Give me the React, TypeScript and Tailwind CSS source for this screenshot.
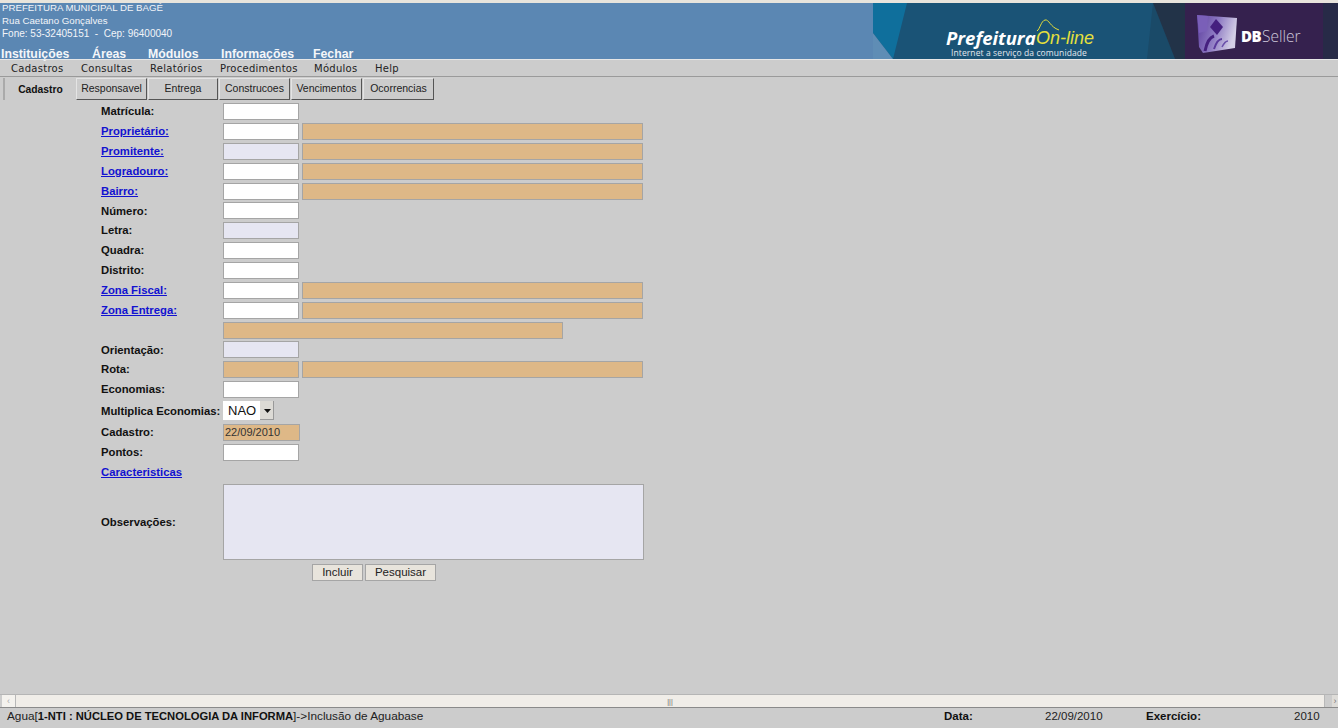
const Arial = { fontFamily: '"Liberation Sans", Arial, sans-serif' };

const topLinks = [
  { label: "Instituições", w: "w-[91px]" },
  { label: "Áreas", w: "w-[56px]" },
  { label: "Módulos", w: "w-[73px]" },
  { label: "Informações", w: "w-[92px]" },
  { label: "Fechar", w: "w-[60px]" },
];

const menus = [
  { label: "Cadastros", w: "w-[70px]" },
  { label: "Consultas", w: "w-[69px]" },
  { label: "Relatórios", w: "w-[70px]" },
  { label: "Procedimentos", w: "w-[94px]" },
  { label: "Módulos", w: "w-[61px]" },
  { label: "Help", w: "w-[40px]" },
];

const tabs = [
  { label: "Responsavel", w: "w-[71px]" },
  { label: "Entrega", w: "w-[70px]" },
  { label: "Construcoes", w: "w-[71px]" },
  { label: "Vencimentos", w: "w-[71px]" },
  { label: "Ocorrencias", w: "w-[71px]" },
];

type RowData = {
  label?: string;
  link?: boolean;
  code?: "white" | "lilac" | "tan";
  desc?: boolean;
  h: string;
};

const rows: RowData[] = [
  { label: "Matrícula:", code: "white", h: "h-[20px]" },
  { label: "Proprietário:", link: true, code: "white", desc: true, h: "h-[20px]" },
  { label: "Promitente:", link: true, code: "lilac", desc: true, h: "h-[20px]" },
  { label: "Logradouro:", link: true, code: "white", desc: true, h: "h-[20px]" },
  { label: "Bairro:", link: true, code: "white", desc: true, h: "h-[20px]" },
  { label: "Número:", code: "white", h: "h-[19px]" },
  { label: "Letra:", code: "lilac", h: "h-[20px]" },
  { label: "Quadra:", code: "white", h: "h-[20px]" },
  { label: "Distrito:", code: "white", h: "h-[20px]" },
  { label: "Zona Fiscal:", link: true, code: "white", desc: true, h: "h-[20px]" },
  { label: "Zona Entrega:", link: true, code: "white", desc: true, h: "h-[20px]" },
];

const rowsAfter: RowData[] = [
  { label: "Orientação:", code: "lilac", h: "h-[19px]" },
  { label: "Rota:", code: "tan", desc: true, h: "h-[20px]" },
  { label: "Economias:", code: "white", h: "h-[20px]" },
];

const fieldColor = {
  white: "bg-white",
  lilac: "bg-[#e6e6f2]",
  tan: "bg-[#deb887]",
};

const Field = ({ color, className }: { color: "white" | "lilac" | "tan"; className: string }) => (
  <div className={`h-[17px] border border-[#a5a5a5] ${fieldColor[color]} ${className}`} />
);

const Label = ({ text, link }: { text: string; link?: boolean }) => (
  <div className="w-[122px] shrink-0 whitespace-nowrap pt-[1px] text-[11.3px] font-bold">
    {link ? <a className="text-[#1212d0] underline">{text}</a> : <span className="text-[#111]">{text}</span>}
  </div>
);

const FormRow = ({ label, link, code, desc, h }: RowData) => (
  <div className={`flex items-center ${h}`}>
    <Label text={label ?? ""} link={link} />
    {code && <Field color={code} className="w-[76px]" />}
    {desc && <Field color="tan" className="ml-[3px] w-[341px]" />}
  </div>
);

const Banner = () => (
  <div className="relative h-[56px] w-[465px] shrink-0 overflow-hidden bg-[#1a5376]">
    <svg width="465" height="56" viewBox="0 0 465 56" className="absolute inset-0">
      <defs>
        <linearGradient id="dbs" x1="0" y1="0" x2="1" y2="0.3">
          <stop offset="0" stopColor="#5a3a9c" />
          <stop offset="0.55" stopColor="#8f7cc4" />
          <stop offset="1" stopColor="#d4cfe6" />
        </linearGradient>
      </defs>
      <polygon points="0,0 34,0 20,56 0,30" fill="#0f6f9c" />
      <polygon points="0,30 20,56 0,56" fill="#5f8db5" />
      <polygon points="280,0 302,56 274,56" fill="#1a4a68" />
      <polygon points="280,0 312,0 312,56 302,56" fill="#223348" />
      <rect x="312" y="0" width="138" height="56" fill="#35214e" />
      <rect x="450" y="0" width="15" height="56" fill="#272a47" />
      <path d="M164 28 C167 26 168 18 172 17 C176 16 177 24 186 27" fill="none" stroke="#e4dc3a" strokeWidth="1" />
      <polygon points="324,12 364,15 362,45 330,50 326,44" fill="url(#dbs)" />
      <polygon points="324,12 335,13 334,28 326,30" fill="#7a5fb8" />
      <polygon points="343,16 350,24 344,32 337,24" fill="#45207f" />
      <path d="M332 48 C334 38 338 34 341 33" fill="none" stroke="#45207f" strokeWidth="3" />
      <path d="M341 46 C343 40 346 36 349 36" fill="none" stroke="#5a3a9c" strokeWidth="2" />
      <path d="M349 44 C351 40 353 38 355 38" fill="none" stroke="#6a50aa" strokeWidth="1.5" />
    </svg>
    <span className="absolute left-[73px] top-[26px] text-[18.5px] font-bold italic leading-[18px] text-white" style={{ fontFamily: '"Open Sans", sans-serif' }}>
      Prefeitura
    </span>
    <span className="absolute left-[163px] top-[26px] text-[18px] italic leading-[18px] text-[#e6e03c]" style={Arial}>
      On-line
    </span>
    <span className="absolute left-[78px] top-[45px] text-[8.5px] leading-[10px] tracking-[0.1px] text-[#e4e8ee]" style={{ fontFamily: '"Open Sans", sans-serif' }}>
      Internet a serviço da comunidade
    </span>
    <span className="absolute left-[368px] top-[23px] text-[15px] font-extrabold leading-[20px] tracking-[-0.4px] text-white" style={{ fontFamily: '"Open Sans", sans-serif' }}>
      DB
    </span>
    <span className="absolute left-[389px] top-[23px] text-[15.5px] leading-[20px] text-[#cfc9dc]" style={{ fontFamily: '"Open Sans", sans-serif', fontWeight: 300 }}>
      Seller
    </span>
  </div>
);

export default function App() {
  return (
    <div className="flex h-[728px] w-[1338px] flex-col overflow-hidden bg-[#cccccc]" style={Arial}>
      <div className="h-[3px] shrink-0 bg-[#e8e4dc]" />

      <header className="flex h-[56px] shrink-0 bg-[#5b87b3]">
        <div className="flex-1 pl-[2px] text-white">
          <div className="-mt-[2px] h-[43px] text-[10px] leading-[13px] text-[#f2f4f8]">
            <div className="text-[9.7px]">PREFEITURA MUNICIPAL DE BAGÉ</div>
            <div className="text-[9.7px]">Rua Caetano Gonçalves</div>
            <div className="whitespace-pre">Fone: 53-32405151  -  Cep: 96400040</div>
          </div>
          <nav className="-ml-px mt-[3px] flex text-[12.3px] font-bold leading-[14px] text-[#f4f6f9]">
            {topLinks.map((l) => (
              <span key={l.label} className={l.w}>
                {l.label}
              </span>
            ))}
          </nav>
        </div>
        <Banner />
      </header>

      <div className="flex h-[18px] shrink-0 items-center border-b border-t border-b-[#9a9a9a] border-t-[#e6e6e6] pl-[11px] text-[10px] tracking-[0.28px] text-[#222]" style={{ fontFamily: '"DejaVu Sans", sans-serif' }}>
        {menus.map((m) => (
          <span key={m.label} className={m.w}>
            {m.label}
          </span>
        ))}
      </div>

      <div className="flex h-[23px] shrink-0 pl-[3px] pt-[1px] text-[10.5px] text-[#222]">
        <div className="flex h-[22px] w-[73px] items-center justify-center border-l-2 border-[#aaaaaa] pt-[1px] text-[10.3px] font-bold text-[#111]">Cadastro</div>
        {tabs.map((t) => (
          <div
            key={t.label}
            className={`mr-[1px] flex h-[22px] items-center justify-center border border-t-[#e4e4e4] border-l-[#e4e4e4] border-r-[#555] border-b-[#555] bg-[#cccccc] ${t.w}`}
          >
            {t.label}
          </div>
        ))}
      </div>

      <main className="flex-1 pl-[101px] pt-[1px]">
        {rows.map((r) => (
          <FormRow key={r.label} {...r} />
        ))}
        <div className="flex h-[20px] items-center pl-[122px]">
          <Field color="tan" className="w-[340px]" />
        </div>
        {rowsAfter.map((r) => (
          <FormRow key={r.label} {...r} />
        ))}

        <div className="flex h-[23px] items-center">
          <Label text="Multiplica Economias:" />
          <div className="flex h-[19px] w-[51px] items-center bg-white pl-[5px] text-[13px] text-[#111]">
            NAO
            <span className="ml-auto flex h-[19px] w-[14px] items-center justify-center bg-[#dcdad5] shadow-[inset_-1px_-1px_0_#999]">
              <svg width="7" height="4" viewBox="0 0 7 4">
                <polygon points="0,0 7,0 3.5,4" fill="#111" />
              </svg>
            </span>
          </div>
        </div>
        <div className="flex h-[20px] items-center">
          <Label text="Cadastro:" />
          <div className="flex h-[17px] w-[77px] items-center border border-[#a5a5a5] bg-[#deb887] pl-[1px] text-[11px] text-[#333]">22/09/2010</div>
        </div>
        <FormRow label="Pontos:" code="white" h="h-[20px]" />
        <div className="flex h-[19px] items-center">
          <Label text="Caracteristicas" link />
        </div>
        <div className="mt-[3px] flex h-[76px] items-center">
          <Label text="Observações:" />
          <div className="h-[76px] w-[421px] border border-[#a5a5a5] bg-[#e6e6f2]" />
        </div>
        <div className="mt-[4px] flex gap-[2px] pl-[211px] text-[11.5px] text-[#222]">
          <div className="flex h-[17px] w-[51px] items-center justify-center border border-[#a5a5a5] bg-[#e8e4dc]">Incluir</div>
          <div className="flex h-[17px] w-[71px] items-center justify-center border border-[#a5a5a5] bg-[#e8e4dc]">Pesquisar</div>
        </div>
      </main>

      <div className="flex h-[14px] shrink-0 border-b border-t border-b-[#8a8a8a] border-t-[#b5b5b5] pl-[2px]">
        <div className="flex w-[13px] items-center justify-center bg-[#f4f2ee] text-[9px] leading-none text-[#aaaaaa]">‹</div>
        <div className="flex w-[1310px] items-center justify-center border-x border-[#b8b8b8] bg-[#f0ede8] text-[7px] leading-none text-[#666]">|||</div>
        <div className="ml-[7px] flex flex-1 items-center justify-center bg-[#dedcd8] text-[9px] leading-none text-[#777]">›</div>
      </div>

      <footer className="flex h-[20px] shrink-0 items-start pl-[7px] pt-[1px] text-[11.5px] leading-[15px] text-[#222]">
        <div className="w-[937px] shrink-0 text-[11.8px]">
          Agua[<b className="text-[11.2px] text-[#111]">1-NTI : NÚCLEO DE TECNOLOGIA DA INFORMA</b>]-&gt;Inclusão de Aguabase
        </div>
        <b className="w-[101px] shrink-0 text-[#111]">Data:</b>
        <span className="w-[101px] shrink-0">22/09/2010</span>
        <b className="w-[148px] shrink-0 text-[#111]">Exercício:</b>
        <span>2010</span>
      </footer>
    </div>
  );
}
